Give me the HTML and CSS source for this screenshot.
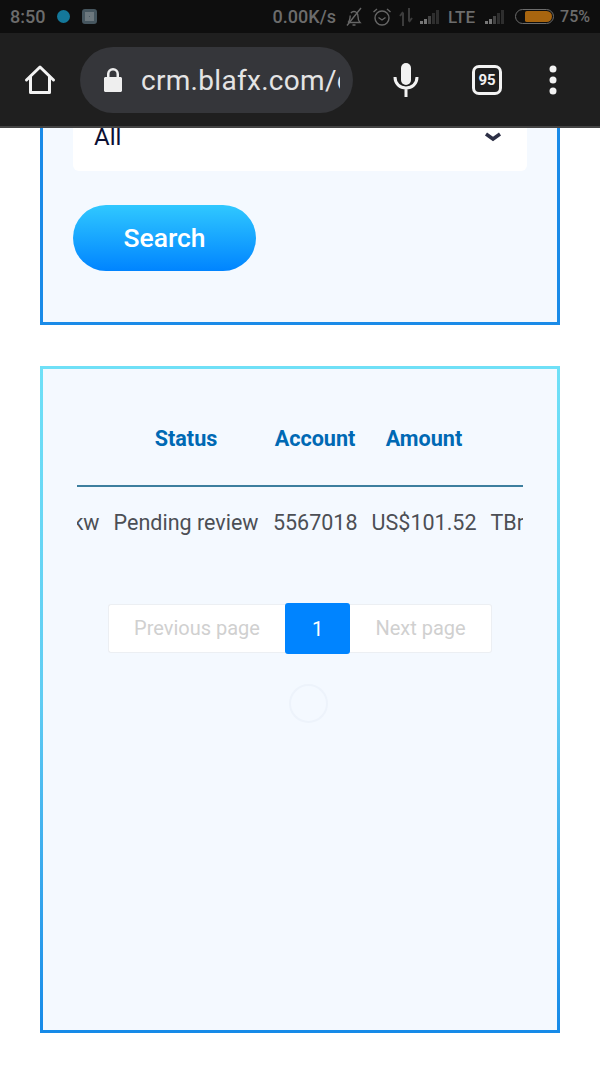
FILE: index.html
```html
<!DOCTYPE html>
<html lang="en">
<head>
  <meta charset="UTF-8">
  <title>crm.blafx.com</title>
  <link rel="stylesheet" href="styles.css">
</head>
<body>

  <header class="phone-top">
    <div class="status-bar">
      <div class="status-left">
        <span>8:50</span>
        <span class="notif-dot"></span>
        <span class="notif-square"></span>
      </div>
      <div class="status-right">
        <span>0.00K/s</span>
        <svg class="bell-icon" width="18" height="20" viewBox="0 0 18 20" fill="none" stroke="#666" stroke-width="1.4">
          <path d="M3 15.500h12c-1.600-1.600-2-3-2-6 0-2.800-1.700-5-4-5-1.300 0-2.400.6-3.100 1.700M5.200 8.500c-.1 3.500-.6 5.500-2.200 7"/>
          <path d="M7.500 18h3M2 18.500 16 1"/>
        </svg>
        <svg width="20" height="20" viewBox="0 0 20 20" fill="none" stroke="#666" stroke-width="1.400">
          <circle cx="10" cy="11" r="7"/>
          <path d="M6.500 10.500 10 13l3.500-2.500M1.500 5 5 2M18.500 5 15 2"/>
        </svg>
        <svg width="14" height="18" viewBox="0 0 14 18" fill="none" stroke="#3c3c3c" stroke-width="2">
          <path d="M4 18V5M1 8l3-4M10 0v13M13 10l-3 4"/>
        </svg>
        <svg width="21" height="14" viewBox="0 0 21 14" fill="#2e2e2e">
          <rect x="0" y="11" width="3" height="3" fill="#777"/>
          <rect x="4" y="9" width="3" height="5" fill="#777"/>
          <rect x="8" y="6" width="3" height="8" fill="#444"/>
          <rect x="12" y="3" width="3" height="11"/>
          <rect x="16" y="0" width="3" height="14"/>
        </svg>
        <span class="status-small">LTE</span>
        <svg class="signal-two" width="21" height="14" viewBox="0 0 21 14" fill="#2e2e2e">
          <rect x="0" y="11" width="3" height="3" fill="#777"/>
          <rect x="4" y="9" width="3" height="5" fill="#777"/>
          <rect x="8" y="6" width="3" height="8" fill="#444"/>
          <rect x="12" y="3" width="3" height="11"/>
          <rect x="16" y="0" width="3" height="14"/>
        </svg>
        <span class="battery"><span class="battery-level"></span></span>
        <span class="battery-text">75%</span>
      </div>
    </div>

    <div class="toolbar">
      <svg class="home-icon" width="32" height="32" viewBox="0 0 32 32" fill="none" stroke="#f2f2f2" stroke-width="3" stroke-linejoin="round" stroke-linecap="round">
        <path d="M2.500 16 16 3l13.500 13"/>
        <path d="M6.500 13v15.500h19V13"/>
      </svg>
      <div class="address-bar">
        <svg width="20" height="28" viewBox="0 0 20 28" fill="#eeeeee">
          <path d="M1 12.500c0-.8.7-1.500 1.500-1.500H4V8a6 6 0 0 1 12 0v3h1.500c.8 0 1.500.7 1.500 1.500v12c0 .8-.7 1.500-1.500 1.500h-15c-.8 0-1.500-.7-1.500-1.500zM6.500 11h7V8a3.500 3.500 0 0 0-7 0z"/>
        </svg>
        <span class="url">crm.blafx.com/d</span>
      </div>
      <svg class="mic-icon" width="26" height="34" viewBox="0 0 26 34" fill="none">
        <rect x="8" y="0" width="10" height="22" rx="5" fill="#f2f2f2"/>
        <path d="M2 14c0 7 5 11 11 11s11-4 11-11M13 25v9" stroke="#f2f2f2" stroke-width="3"/>
      </svg>
      <div class="tab-count">95</div>
      <svg class="menu-icon" width="10" height="30" viewBox="0 0 10 30" fill="#f2f2f2">
        <circle cx="5" cy="4" r="3.500"/>
        <circle cx="5" cy="15" r="3.500"/>
        <circle cx="5" cy="26" r="3.500"/>
      </svg>
    </div>
  </header>

  <main>
    <section class="card filter-card">
      <div class="select-box">
        <span>All</span>
        <svg width="18" height="10" viewBox="0 0 18 10" fill="none" stroke="#2c2f45" stroke-width="3.500">
          <path d="M2 2l7 5 7-5"/>
        </svg>
      </div>
      <button class="search-btn">Search</button>
    </section>

    <section class="card result-card">
      <div class="table-wrap">
        <table class="orders">
          <thead>
            <tr>
              <th class="col-type"></th>
              <th class="col-status">Status</th>
              <th class="col-account">Account</th>
              <th class="col-amount">Amount</th>
              <th class="col-method"></th>
            </tr>
          </thead>
          <tbody>
            <tr>
              <td>Bankw</td>
              <td>Pending review</td>
              <td>5567018</td>
              <td>US$101.52</td>
              <td>TBr</td>
            </tr>
          </tbody>
        </table>
      </div>

      <div class="pagination">
        <span class="page-link">Previous page</span>
        <span class="page-current">1</span>
        <span class="page-link">Next page</span>
      </div>

      <div class="spinner"></div>
    </section>
  </main>

</body>
</html>
```

FILE: styles.css
```css
* {
  box-sizing: border-box;
}
html, body {
  height: 100%;
}
body {
  margin: 0;
  background: #fff;
  font-family: Roboto, "Liberation Sans", sans-serif;
  overflow: hidden;
}

.phone-top {
  position: relative;
  z-index: 2;
}
.status-bar {
  height: 33px;
  background: #0e0e0e;
  color: #6c6c6c;
  display: flex;
  justify-content: space-between;
  align-items: center;
  padding: 0 10px;
  font-size: 18px;
  font-weight: 500;
}
.status-left {
  display: flex;
  align-items: center;
  gap: 12px;
}
.notif-dot {
  width: 13px;
  height: 13px;
  border-radius: 50%;
  background: #14789a;
}
.notif-square {
  width: 15px;
  height: 15px;
  border-radius: 3px;
  background: #4a5a64;
  border: 3px solid #46565f;
  box-shadow: inset 0 0 0 4px #6d787e;
}
.status-right {
  display: flex;
  align-items: center;
  gap: 7px;
}
.bell-icon {
  margin-left: 2px;
  margin-right: 2px;
}
.status-small {
  font-size: 17px;
}
.signal-two {
  margin-left: 3px;
}
.battery {
  width: 39px;
  height: 15px;
  margin-left: 2px;
  border: 1px solid #6c6c6c;
  border-radius: 8px;
  padding: 1px 1px 1px 9px;
  display: flex;
}
.battery-level {
  flex: 1;
  background: #a8650f;
  border-radius: 2px 6px 6px 2px;
}
.battery-text {
  font-size: 16px;
  margin-left: -1px;
}

.toolbar {
  height: 95px;
  background: #1f1f1f;
  border-bottom: 2px solid #444;
  display: flex;
  align-items: center;
  padding: 1px 0 0 24px;
}
.home-icon {
  flex: none;
}
.address-bar {
  width: 273px;
  height: 66px;
  margin-left: 24px;
  background: #35363a;
  border-radius: 33px;
  display: flex;
  align-items: center;
  padding-left: 23px;
  gap: 18px;
  overflow: hidden;
}
.url {
  width: 199px;
  overflow: hidden;
  white-space: nowrap;
  color: #e4e4e4;
  font-size: 28px;
  letter-spacing: 0.3px;
}
.mic-icon {
  margin-left: 40px;
}
.tab-count {
  width: 30px;
  height: 30px;
  margin-left: 53px;
  border: 3px solid #f2f2f2;
  border-radius: 7px;
  color: #f2f2f2;
  font-size: 15px;
  font-weight: 700;
  display: flex;
  align-items: center;
  justify-content: center;
}
.menu-icon {
  margin-left: 46px;
}

.card {
  margin: 0 40px;
  background: #f4f9ff;
  border: 3px solid;
}
.filter-card {
  margin-top: -60px;
  height: 257px;
  padding: 31px 30px 0;
  border-color: #1a8be8;
}
.select-box {
  height: 69px;
  background: #fff;
  border-radius: 6px;
  display: flex;
  align-items: center;
  justify-content: space-between;
  padding: 0 25px 0 21px;
  color: #0b1033;
  font-size: 24px;
}
.search-btn {
  display: block;
  width: 183px;
  height: 66px;
  margin-top: 34px;
  padding: 0 0 2px;
  border: none;
  border-radius: 33px;
  background: linear-gradient(#30c8ff, #0084ff);
  color: #fff;
  font-family: inherit;
  font-size: 26.5px;
  font-weight: 500;
}

.result-card {
  margin-top: 41px;
  height: 667px;
  padding: 0 34px;
  border-image: linear-gradient(#6fe0f7, #60cdf3 50%, #168ae8 100%) 1;
}
.table-wrap {
  overflow: hidden;
}
.orders {
  table-layout: fixed;
  width: 500px;
  margin-left: -53.5px;
  border-collapse: collapse;
  font-size: 21.5px;
}
.orders th {
  height: 117px;
  padding: 22px 0 0;
  color: #0069b4;
  font-size: 21.6px;
  font-weight: 700;
  text-align: center;
}
.orders thead tr {
  border-bottom: 2px solid #3d7f9f;
}
.orders td {
  height: 72px;
  padding: 0 7px;
  color: #4c4f55;
  white-space: nowrap;
  overflow: hidden;
  text-align: right;
}
.orders td:last-child {
  text-align: left;
}
.col-type { width: 83px; }
.col-status { width: 159px; }
.col-account { width: 99px; }
.col-amount { width: 119px; }
.col-method { width: 40px; }

.pagination {
  width: 384px;
  height: 51px;
  margin: 45px 0 0 31px;
  display: flex;
  align-items: center;
  font-size: 20px;
}
.page-link {
  height: 49px;
  padding-bottom: 1px;
  background: #fff;
  border: 1px solid #eceff3;
  color: #d0d0d0;
  display: flex;
  align-items: center;
  justify-content: center;
}
.page-link:first-child {
  width: 177px;
  border-right: none;
  border-radius: 3px 0 0 3px;
}
.page-link:last-child {
  width: 142px;
  border-left: none;
  border-radius: 0 3px 3px 0;
}
.page-current {
  width: 65px;
  height: 51px;
  background: #0084ff;
  border-radius: 3px;
  color: #fff;
  display: flex;
  align-items: center;
  justify-content: center;
}
.spinner {
  width: 39px;
  height: 39px;
  margin: 30px 0 0 212px;
  border: 2px solid #edf3fb;
  border-radius: 50%;
}
```
